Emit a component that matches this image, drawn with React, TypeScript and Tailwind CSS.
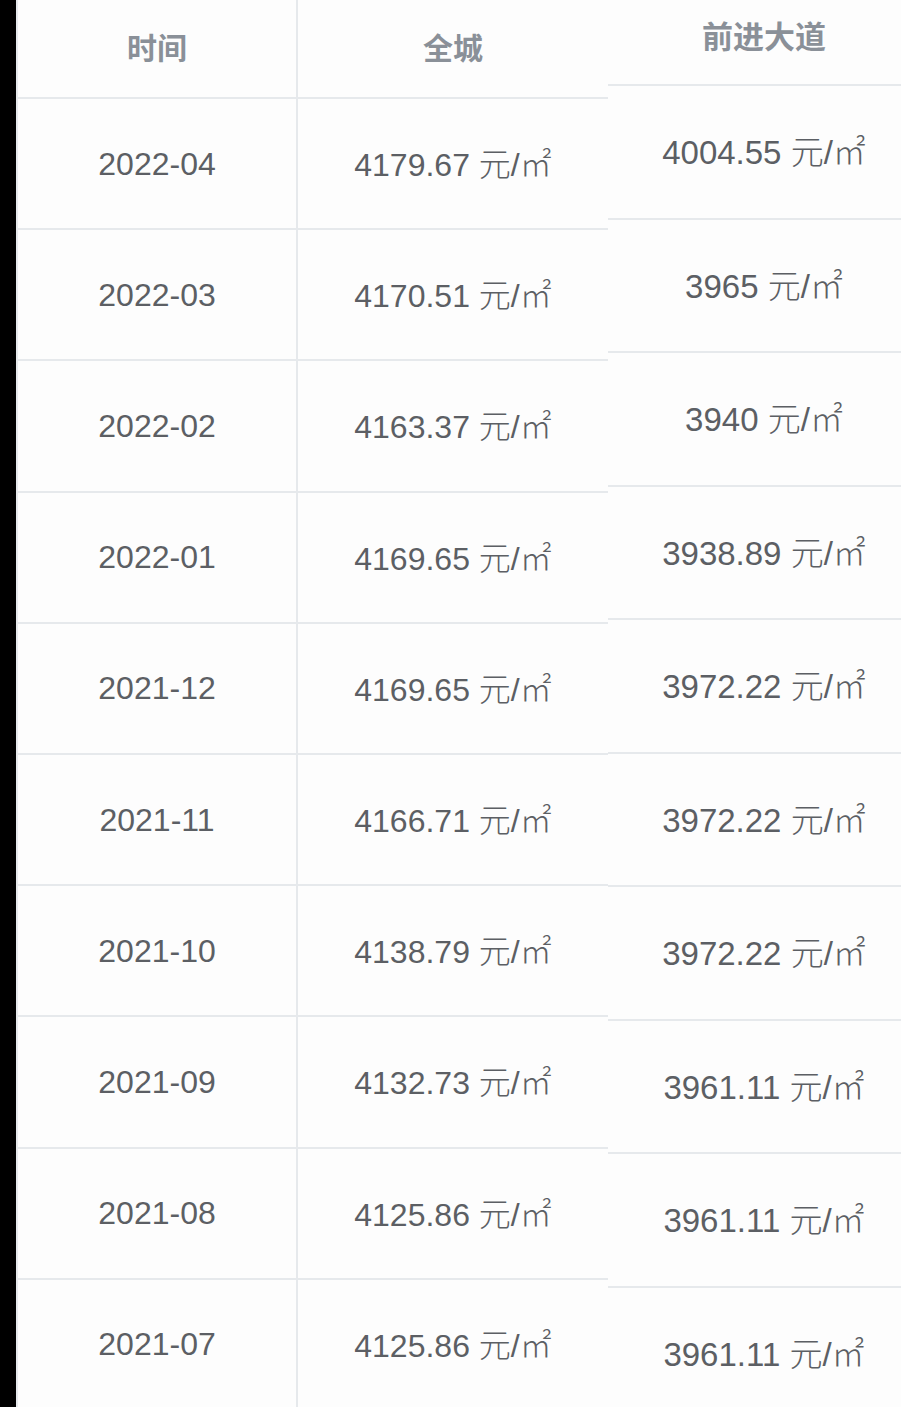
import React from "react";

const left: [string, string][] = [
  ["2022-04", "4179.67"],
  ["2022-03", "4170.51"],
  ["2022-02", "4163.37"],
  ["2022-01", "4169.65"],
  ["2021-12", "4169.65"],
  ["2021-11", "4166.71"],
  ["2021-10", "4138.79"],
  ["2021-09", "4132.73"],
  ["2021-08", "4125.86"],
  ["2021-07", "4125.86"],
];

const right = [
  "4004.55",
  "3965",
  "3940",
  "3938.89",
  "3972.22",
  "3972.22",
  "3972.22",
  "3961.11",
  "3961.11",
  "3961.11",
];

const font = "font-['Liberation_Sans','Noto_Sans_CJK_SC',sans-serif]";

function Price({ v }: { v: string }) {
  return (
    <span className="whitespace-nowrap">
      {v} <span className="font-['Noto_Sans_CJK_SC',sans-serif] font-light">元</span>/
      <span className="font-['Noto_Sans_CJK_SC',sans-serif] font-light">㎡</span>
    </span>
  );
}

export default function App() {
  return (
    <div className={`w-[901px] h-[1407px] overflow-hidden flex bg-[#fdfdfd] ${font}`}>
      <div className="w-[16px] shrink-0 bg-black" />
      <div className="w-[592px] shrink-0 border-l-2 border-[#e6e9ec] flex flex-col">
        <div className="h-[99px] shrink-0 flex border-b-2 border-[#e6e9ec]">
          <div className="w-[280px] border-r-2 border-[#e6e9ec] flex items-center justify-center pb-[4px] text-[30px] font-bold text-[#8a9098] font-['Noto_Sans_CJK_SC',sans-serif]">
            时间
          </div>
          <div className="flex-1 flex items-center justify-center pb-[4px] text-[30px] font-bold text-[#8a9098] font-['Noto_Sans_CJK_SC',sans-serif]">
            全城
          </div>
        </div>
        {left.map(([d, p]) => (
          <div key={d} className="h-[131.2px] shrink-0 flex border-b-2 border-[#e6e9ec] text-[32px] text-[#5c5f64]">
            <div className="w-[280px] border-r-2 border-[#e6e9ec] flex items-center justify-center">
              {d}
            </div>
            <div className="flex-1 flex items-center justify-center">
              <Price v={p} />
            </div>
          </div>
        ))}
      </div>
      <div className="w-[312px] shrink-0 flex flex-col">
        <div className="h-[86px] shrink-0 border-b-2 border-[#e6e9ec] flex items-center justify-center pb-[14px] text-[31px] font-bold text-[#8a9098] font-['Noto_Sans_CJK_SC',sans-serif]">
          前进大道
        </div>
        {right.map((p, i) => (
          <div key={i} className="h-[133.5px] shrink-0 border-b-2 border-[#e6e9ec] flex items-center justify-center text-[33px] text-[#5c5f64]">
            <Price v={p} />
          </div>
        ))}
      </div>
    </div>
  );
}
